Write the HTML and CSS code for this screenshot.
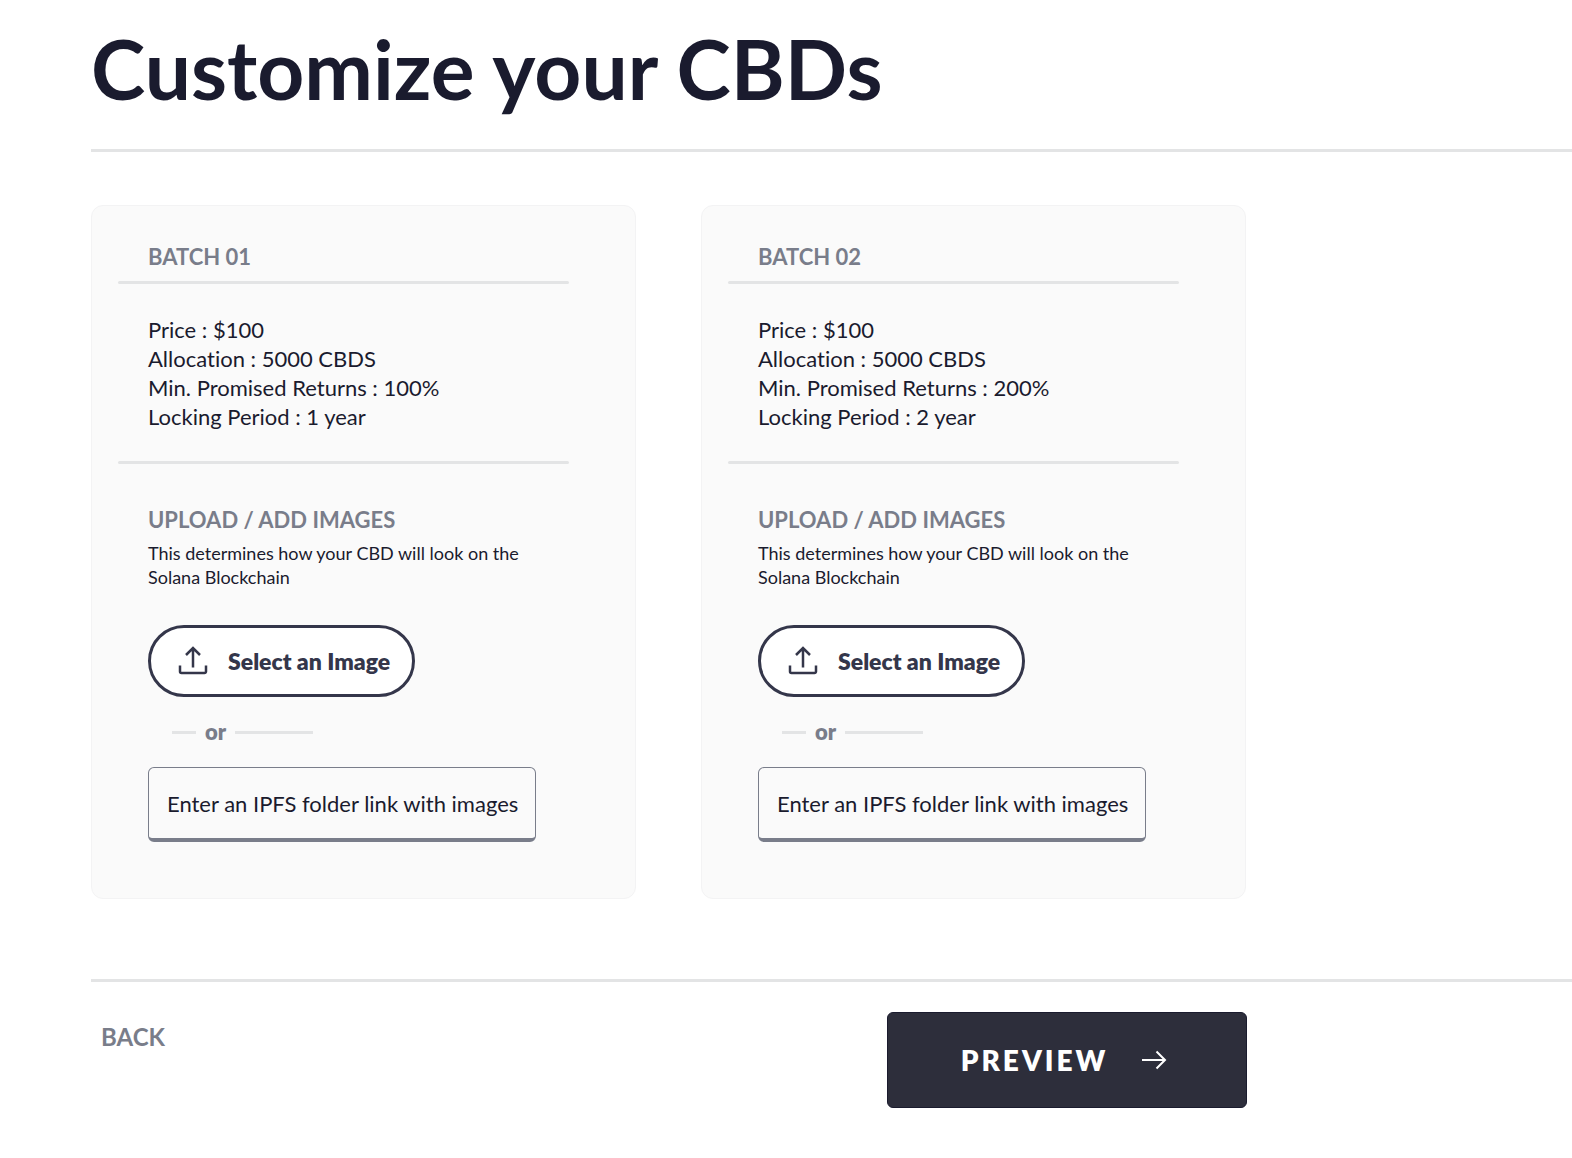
FILE: index.html
```html
<!DOCTYPE html>
<html lang="en">
<head>
  <meta charset="utf-8">
  <meta name="viewport" content="width=device-width, initial-scale=1">
  <title>Customize your CBDs</title>
  <link rel="stylesheet" href="styles.css">
</head>
<body>
  <main class="page">
    <h1 class="page-title">Customize your CBDs</h1>
    <hr class="rule">

    <div class="batches">
      <section class="card">
        <h2 class="card-heading">BATCH 01</h2>
        <hr class="rule card-rule">
        <ul class="facts">
          <li>Price : $100</li>
          <li>Allocation : 5000 CBDS</li>
          <li>Min. Promised Returns : 100%</li>
          <li>Locking Period : 1 year</li>
        </ul>
        <hr class="rule card-rule">
        <div class="upload">
          <h3 class="card-heading">UPLOAD / ADD IMAGES</h3>
          <p class="hint">This determines how your CBD will look on the Solana Blockchain</p>
          <button class="select-button" type="button">
            <svg class="upload-icon" viewBox="0 0 30 30" aria-hidden="true">
              <path d="M15 21.500V2M8 9l7-7 7 7M2 19.500v6a1.500 1.500 0 0 0 1.500 1.500h23a1.500 1.500 0 0 0 1.500-1.500v-6"/>
            </svg>
            Select an Image
          </button>
          <div class="divider">or</div>
          <input class="link-input" type="url" aria-label="IPFS folder link for batch 01" placeholder="Enter an IPFS folder link with images">
        </div>
      </section>

      <section class="card">
        <h2 class="card-heading">BATCH 02</h2>
        <hr class="rule card-rule">
        <ul class="facts">
          <li>Price : $100</li>
          <li>Allocation : 5000 CBDS</li>
          <li>Min. Promised Returns : 200%</li>
          <li>Locking Period : 2 year</li>
        </ul>
        <hr class="rule card-rule">
        <div class="upload">
          <h3 class="card-heading">UPLOAD / ADD IMAGES</h3>
          <p class="hint">This determines how your CBD will look on the Solana Blockchain</p>
          <button class="select-button" type="button">
            <svg class="upload-icon" viewBox="0 0 30 30" aria-hidden="true">
              <path d="M15 21.500V2M8 9l7-7 7 7M2 19.500v6a1.500 1.500 0 0 0 1.500 1.500h23a1.500 1.500 0 0 0 1.500-1.500v-6"/>
            </svg>
            Select an Image
          </button>
          <div class="divider">or</div>
          <input class="link-input" type="url" aria-label="IPFS folder link for batch 02" placeholder="Enter an IPFS folder link with images">
        </div>
      </section>
    </div>

    <hr class="rule">
    <nav class="actions" aria-label="Steps">
      <a class="back" href="#back">BACK</a>
      <button class="preview" type="button">
        PREVIEW
        <svg class="arrow-icon" viewBox="0 0 26 20" aria-hidden="true">
          <path d="M1 10h23M15.500 1.500L24 10l-8.500 8.500"/>
        </svg>
      </button>
    </nav>
  </main>
</body>
</html>
```
FILE: styles.css
```css
:root {
  --ink: #1a1b2e;
  --slate: #2d2e3b;
  --outline: #34364a;
  --muted: #797d8a;
  --line: #e3e4e5;
  --card: #fafafa;
}

*,
*::before,
*::after {
  box-sizing: border-box;
}

body {
  margin: 0;
  background: #fff;
  color: var(--ink);
  font-family: Lato, "Liberation Sans", sans-serif;
  font-size: 22px;
  font-variant-ligatures: no-common-ligatures;
  line-height: 28px;
}

h1,
h2,
h3,
p,
ul {
  margin: 0;
  padding: 0;
}

button,
input {
  font: inherit;
}

.page {
  padding: 19px 0 48px 91px;
}

.page-title {
  margin-bottom: 31px;
  font-size: 82px;
  font-weight: 700;
  line-height: 99px;
}

.rule {
  height: 3px;
  margin: 0;
  border: 0;
  background: var(--line);
}

.batches {
  display: grid;
  grid-template-columns: 1fr 1fr;
  gap: 65px;
  max-width: 1155px;
  margin: 53px 0 80px;
}

.card {
  padding: 37px 66px 56px 56px;
  border: 1px solid #f3f3f4;
  border-radius: 12px;
  background: var(--card);
}

.card-heading {
  color: var(--muted);
  font-size: 22px;
  font-weight: 700;
}

.card-rule {
  margin: 10px 0 0 -30px;
  border-radius: 2px;
}

.facts {
  margin: 31px 0 30px;
  line-height: 29px;
  list-style: none;
}

.facts + .card-rule {
  margin-top: 0;
}

.upload {
  display: flex;
  flex-direction: column;
  align-items: flex-start;
  padding-top: 42px;
}

.hint {
  max-width: 388px;
  margin-top: 7px;
  font-size: 18px;
  line-height: 24px;
}

.select-button {
  display: flex;
  align-items: center;
  gap: 20px;
  min-height: 72px;
  margin-top: 36px;
  padding: 0 22px 0 27px;
  border: 3px solid var(--outline);
  border-radius: 37px;
  background: #fff;
  color: var(--outline);
  font-size: 23px;
  font-weight: 800;
}

.upload-icon {
  width: 30px;
  height: 30px;
  fill: none;
  stroke: currentColor;
  stroke-width: 2.500;
}

.divider {
  display: flex;
  align-items: center;
  gap: 9px;
  margin: 21px 24px 21px;
  color: var(--muted);
  font-weight: 800;
}

.divider::before,
.divider::after {
  width: 24px;
  height: 3px;
  background: var(--line);
  content: "";
}

.divider::after {
  width: 78px;
}

.link-input {
  width: 100%;
  max-width: 388px;
  height: 75px;
  padding: 0 16px 0 18px;
  border: 1px solid var(--muted);
  border-bottom-width: 4px;
  border-radius: 6px;
  background: transparent;
  color: var(--ink);
}

.link-input::placeholder {
  color: var(--ink);
  opacity: 1;
}

.actions {
  display: flex;
  align-items: flex-start;
  justify-content: space-between;
  max-width: 1156px;
  padding-top: 30px;
}

.back {
  margin: 11px 10px;
  color: var(--muted);
  font-size: 24px;
  font-weight: 700;
  text-decoration: none;
}

.preview {
  display: flex;
  align-items: center;
  justify-content: center;
  gap: 33px;
  width: 360px;
  height: 96px;
  padding: 0 6px 0 0;
  border: 1px solid var(--ink);
  border-radius: 6px;
  background: var(--slate);
  color: #fff;
  font-size: 28px;
  font-weight: 800;
  letter-spacing: 3px;
}

.arrow-icon {
  width: 26px;
  height: 20px;
  fill: none;
  stroke: currentColor;
  stroke-width: 2;
}

@media (max-width: 1100px) {
  .page {
    padding-left: 24px;
  }

  .batches {
    grid-template-columns: 1fr;
    gap: 32px;
    margin-right: 24px;
  }

  .actions {
    margin-right: 24px;
  }
}
```
